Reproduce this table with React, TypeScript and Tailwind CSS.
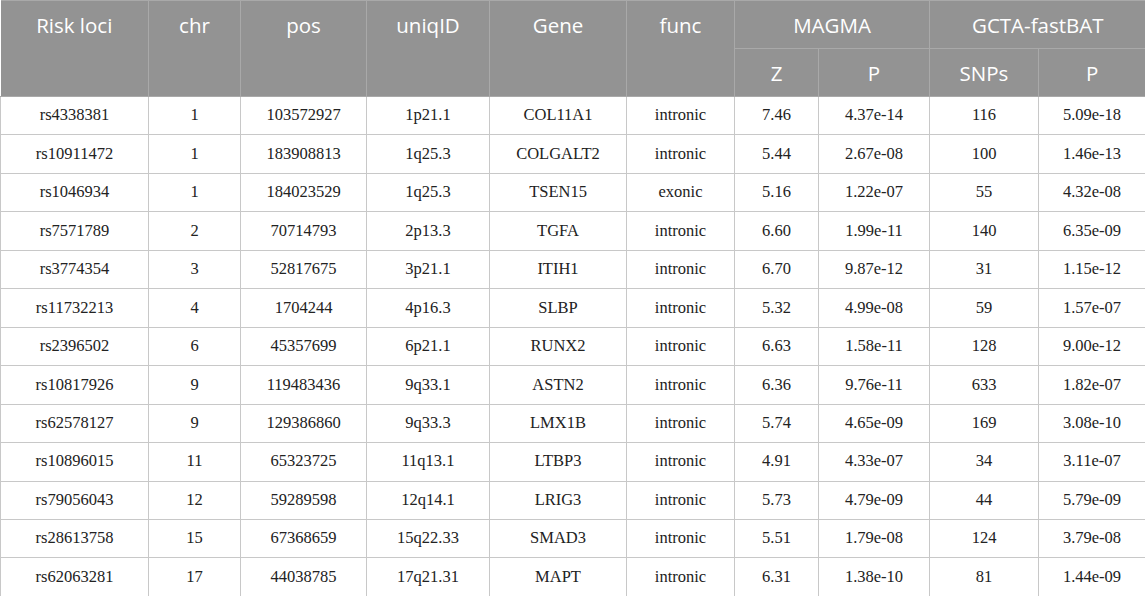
import React from "react";

const rows: string[][] = [
  ["rs4338381", "1", "103572927", "1p21.1", "COL11A1", "intronic", "7.46", "4.37e-14", "116", "5.09e-18"],
  ["rs10911472", "1", "183908813", "1q25.3", "COLGALT2", "intronic", "5.44", "2.67e-08", "100", "1.46e-13"],
  ["rs1046934", "1", "184023529", "1q25.3", "TSEN15", "exonic", "5.16", "1.22e-07", "55", "4.32e-08"],
  ["rs7571789", "2", "70714793", "2p13.3", "TGFA", "intronic", "6.60", "1.99e-11", "140", "6.35e-09"],
  ["rs3774354", "3", "52817675", "3p21.1", "ITIH1", "intronic", "6.70", "9.87e-12", "31", "1.15e-12"],
  ["rs11732213", "4", "1704244", "4p16.3", "SLBP", "intronic", "5.32", "4.99e-08", "59", "1.57e-07"],
  ["rs2396502", "6", "45357699", "6p21.1", "RUNX2", "intronic", "6.63", "1.58e-11", "128", "9.00e-12"],
  ["rs10817926", "9", "119483436", "9q33.1", "ASTN2", "intronic", "6.36", "9.76e-11", "633", "1.82e-07"],
  ["rs62578127", "9", "129386860", "9q33.3", "LMX1B", "intronic", "5.74", "4.65e-09", "169", "3.08e-10"],
  ["rs10896015", "11", "65323725", "11q13.1", "LTBP3", "intronic", "4.91", "4.33e-07", "34", "3.11e-07"],
  ["rs79056043", "12", "59289598", "12q14.1", "LRIG3", "intronic", "5.73", "4.79e-09", "44", "5.79e-09"],
  ["rs28613758", "15", "67368659", "15q22.33", "SMAD3", "intronic", "5.51", "1.79e-08", "124", "3.79e-08"],
  ["rs62063281", "17", "44038785", "17q21.31", "MAPT", "intronic", "6.31", "1.38e-10", "81", "1.44e-09"],
];

const widths = [148, 92, 126, 123, 137, 108, 84, 111, 109, 107];

const th =
  "border border-[#a9a9a9] bg-[#939393] text-white font-normal text-[20.5px] leading-[28px] text-center align-top pt-[10px] px-1";

export default function App() {
  return (
    <div className="w-[1145px] h-[596px] overflow-hidden bg-white">
      <table
        className="border-collapse table-fixed w-[1145px]"
        style={{ fontFamily: "'Open Sans', 'Noto Sans', sans-serif" }}
      >
        <colgroup>
          {widths.map((w, i) => (
            <col key={i} style={{ width: w }} />
          ))}
        </colgroup>
        <thead>
          <tr className="h-[48px]">
            <th rowSpan={2} className={th + " border-l-0"}>Risk loci</th>
            <th rowSpan={2} className={th}>chr</th>
            <th rowSpan={2} className={th}>pos</th>
            <th rowSpan={2} className={th}>uniqID</th>
            <th rowSpan={2} className={th}>Gene</th>
            <th rowSpan={2} className={th}>func</th>
            <th colSpan={2} className={th}>MAGMA</th>
            <th colSpan={2} className={th + " border-r-0"}>GCTA-fastBAT</th>
          </tr>
          <tr className="h-[48px]">
            <th className={th}>Z</th>
            <th className={th}>P</th>
            <th className={th}>SNPs</th>
            <th className={th + " border-r-0"}>P</th>
          </tr>
        </thead>
        <tbody style={{ fontFamily: "'Liberation Serif', 'Times New Roman', serif" }}>
          {rows.map((r, i) => (
            <tr key={i} className="h-[38.46px]">
              {r.map((c, j) => (
                <td
                  key={j}
                  className="border border-[#c8c8c8] text-center align-middle text-[16.5px] text-[#222222] px-1 py-0"
                >
                  {c}
                </td>
              ))}
            </tr>
          ))}
        </tbody>
      </table>
    </div>
  );
}
